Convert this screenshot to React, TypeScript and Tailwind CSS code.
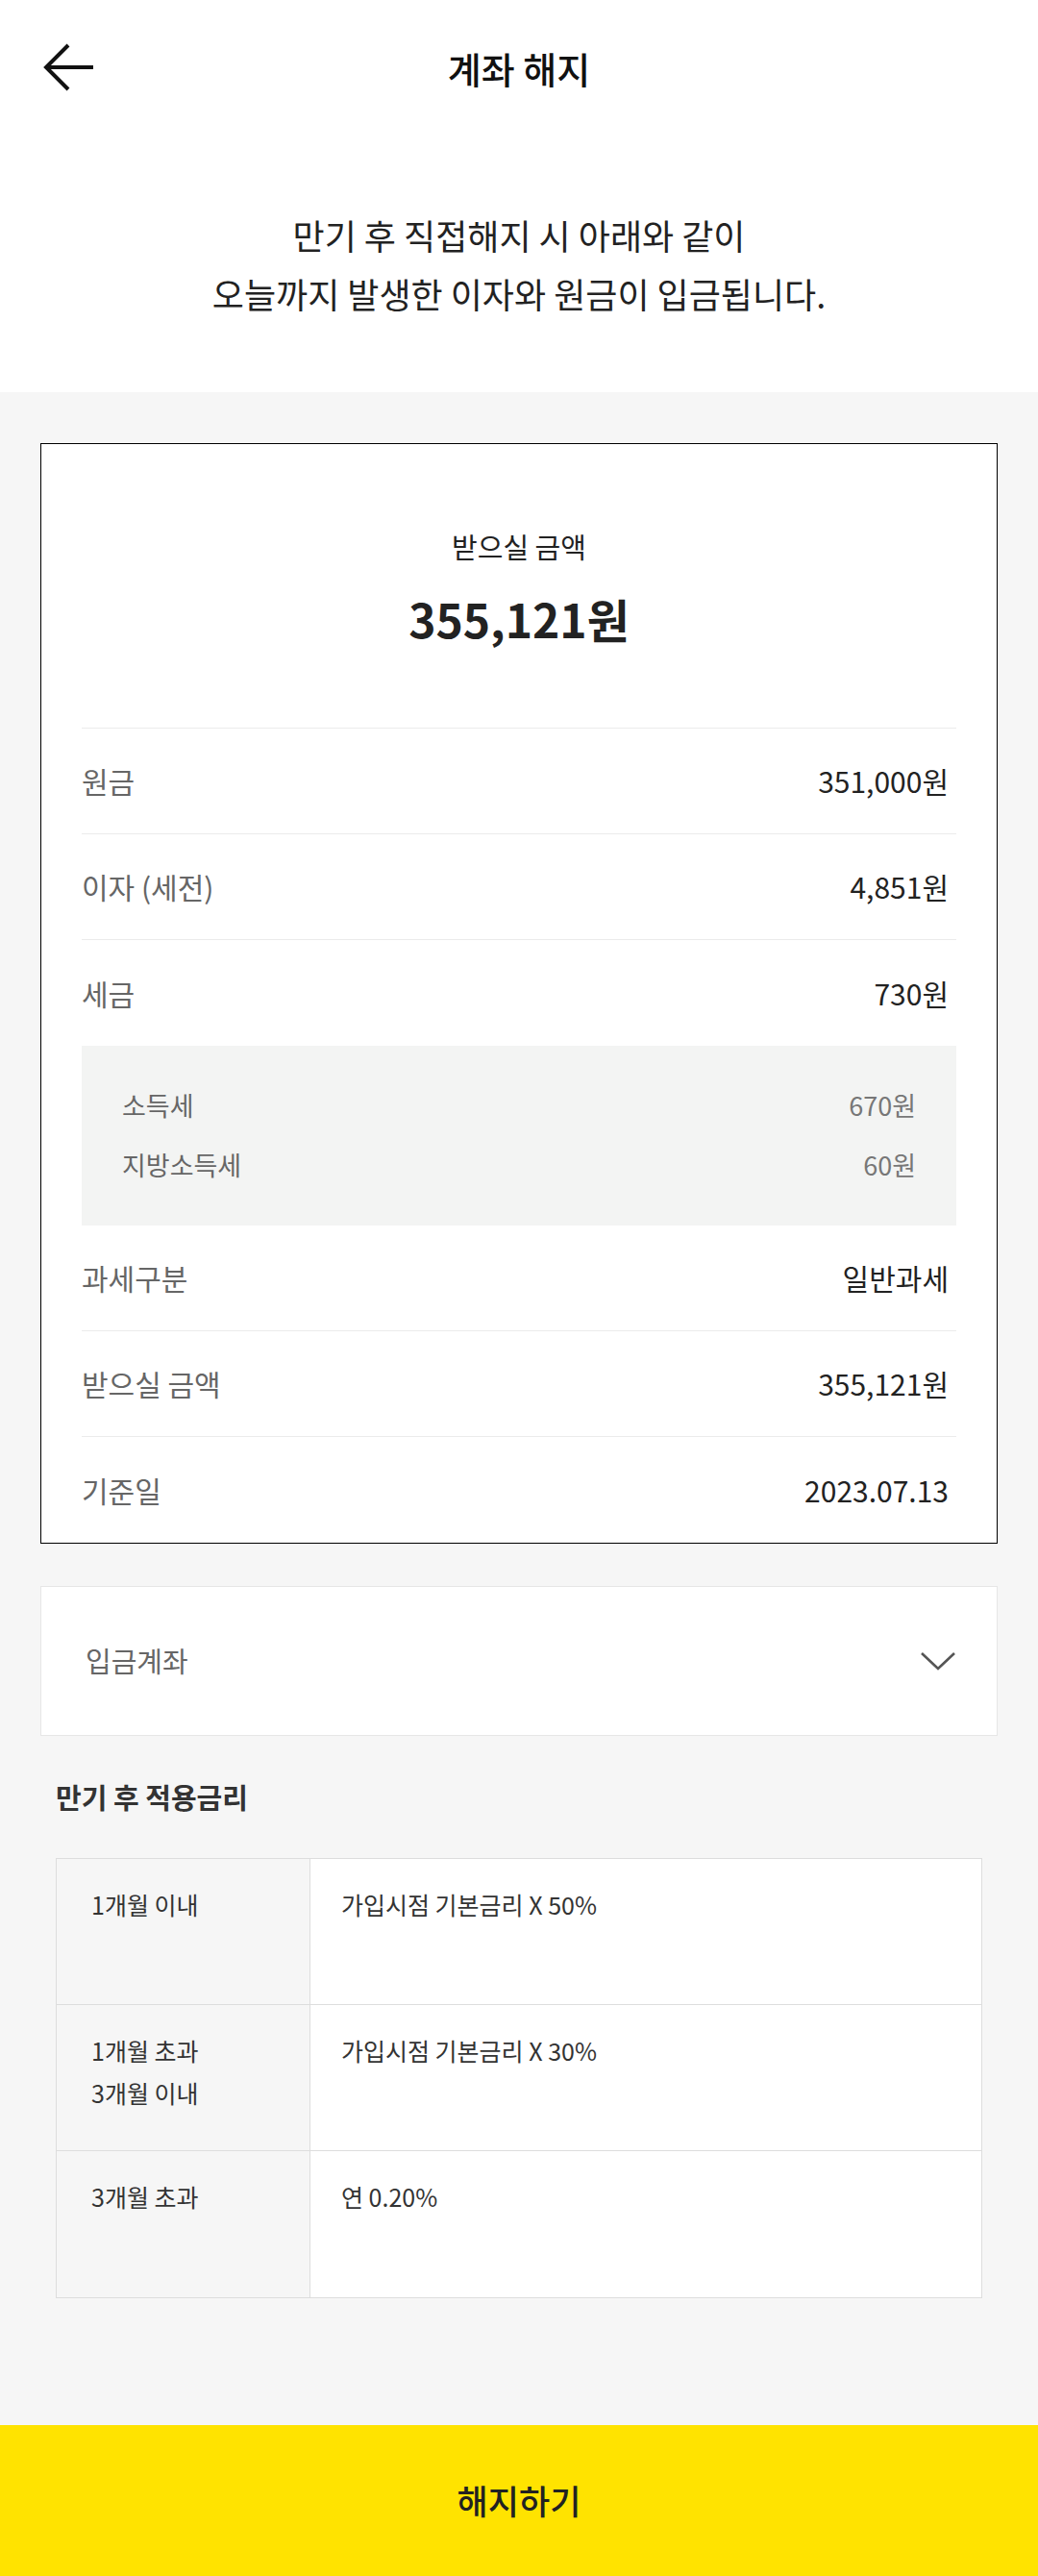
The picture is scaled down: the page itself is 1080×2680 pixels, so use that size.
interface DetailRow {
  label: string
  value: string
  divider?: boolean
}

interface RateRow {
  period: string[]
  rate: string
}

const TOP_ROWS: DetailRow[] = [
  { label: '원금', value: '351,000원', divider: true },
  { label: '이자 (세전)', value: '4,851원', divider: true },
  { label: '세금', value: '730원' }
]

const TAX_ROWS = [
  { label: '소득세', value: '670원' },
  { label: '지방소득세', value: '60원' }
]

const BOTTOM_ROWS: DetailRow[] = [
  { label: '과세구분', value: '일반과세', divider: true },
  { label: '받으실 금액', value: '355,121원', divider: true },
  { label: '기준일', value: '2023.07.13' }
]

const RATE_ROWS: RateRow[] = [
  { period: ['1개월 이내'], rate: '가입시점 기본금리 X 50%' },
  { period: ['1개월 초과', '3개월 이내'], rate: '가입시점 기본금리 X 30%' },
  { period: ['3개월 초과'], rate: '연 0.20%' }
]

function BackArrow() {
  return (
    <svg width="56" height="52" viewBox="0 0 56 52" fill="none">
      <path d="M53 26H4" stroke="#111" strokeWidth="4" />
      <path d="M27 3L4 26l23 23" stroke="#111" strokeWidth="4" strokeLinejoin="miter" />
    </svg>
  )
}

function Chevron() {
  return (
    <svg width="38" height="22" viewBox="0 0 38 22" fill="none">
      <path d="M2 3l17 16L36 3" stroke="#555" strokeWidth="2.6" />
    </svg>
  )
}

function Row({ label, value, divider }: DetailRow) {
  return (
    <div
      className={`h-[110px] flex items-center justify-between ${
        divider ? 'border-b border-[#ebebeb]' : ''
      }`}
    >
      <span className="text-[30px] text-[#666]">{label}</span>
      <span className="text-[30px] text-[#222] pr-2">{value}</span>
    </div>
  )
}

export default function App() {
  return (
    <div className="w-[1080px] min-h-[2680px] bg-[#f6f6f6] font-['Noto_Sans_CJK_KR','Noto_Sans',sans-serif] flex flex-col">
      {/* Header */}
      <div className="bg-white">
        <div className="h-[140px] grid grid-cols-[1fr_auto_1fr] items-center px-[44px]">
          <button type="button" className="justify-self-start">
            <BackArrow />
          </button>
          <h1 className="text-[38px] font-medium text-[#111]">계좌 해지</h1>
          <div />
        </div>
        <p className="pt-[74px] pb-[72px] text-center text-[36px] leading-[61px] text-[#222]">
          만기 후 직접해지 시 아래와 같이
          <br />
          오늘까지 발생한 이자와 원금이 입금됩니다.
        </p>
      </div>

      {/* Content */}
      <div className="flex-1 pt-[53px] pb-[131px]">
        <div className="mx-[42px] bg-white border border-black px-[42px]">
          <div className="h-[296px] border-b border-[#ebebeb] flex flex-col items-center pt-[86px]">
            <div className="text-[29px] leading-[40px] text-[#222]">받으실 금액</div>
            <div className="mt-[25px] text-[48px] leading-[60px] font-bold text-[#222]">355,121원</div>
          </div>

          {TOP_ROWS.map((row) => (
            <Row key={row.label} {...row} />
          ))}

          <div className="h-[187px] bg-[#f3f4f3] px-[42px] py-[31px]">
            {TAX_ROWS.map((row) => (
              <div key={row.label} className="h-[62px] flex items-center justify-between">
                <span className="text-[27px] text-[#666]">{row.label}</span>
                <span className="text-[27px] text-[#777]">{row.value}</span>
              </div>
            ))}
          </div>

          {BOTTOM_ROWS.map((row) => (
            <Row key={row.label} {...row} />
          ))}
        </div>

        <button
          type="button"
          className="mt-[44px] mx-[42px] w-[996px] h-[156px] bg-white border border-[#e6e6e6] flex items-center justify-between pl-[46px] pr-[42px]"
        >
          <span className="text-[29px] text-[#666]">입금계좌</span>
          <Chevron />
        </button>

        <div className="px-[58px]">
          <h2 className="mt-[45px] text-[29px] leading-[36px] font-bold text-[#333]">만기 후 적용금리</h2>

          <div className="mt-[46px] border border-[#dddddd] bg-white">
            {RATE_ROWS.map((row, i) => (
              <div
                key={row.rate}
                className={`h-[152px] grid grid-cols-[264px_1fr] ${
                  i < RATE_ROWS.length - 1 ? 'border-b border-[#dddddd]' : ''
                }`}
              >
                <div className="bg-[#f6f6f6] border-r border-[#dddddd] pl-[36px] pt-[25px] text-[25px] leading-[44px] text-[#333]">
                  {row.period.map((line) => (
                    <div key={line}>{line}</div>
                  ))}
                </div>
                <div className="pl-[32px] pt-[25px] text-[25px] leading-[44px] text-[#333]">{row.rate}</div>
              </div>
            ))}
          </div>
        </div>
      </div>

      {/* Bottom action */}
      <button
        type="button"
        className="h-[157px] w-full bg-[#ffe300] text-[35px] font-medium text-[#222] flex items-center justify-center"
      >
        해지하기
      </button>
    </div>
  )
}
